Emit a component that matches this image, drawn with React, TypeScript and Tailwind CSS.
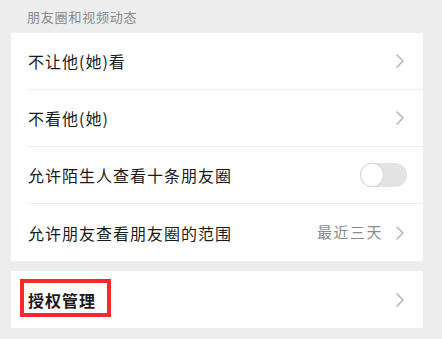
const font = { fontFamily: '"Noto Sans CJK SC", "Noto Sans", sans-serif' };

function Chevron() {
  return (
    <svg width="8" height="14" viewBox="0 0 8 14" className="shrink-0">
      <polyline points="1,1 7,7 1,13" fill="none" stroke="#b5b5b5" strokeWidth="1.5" strokeLinejoin="round" strokeLinecap="round" />
    </svg>
  );
}

function Toggle() {
  return (
    <div className="relative -mr-[3px] w-[47px] h-[24px] rounded-full bg-[#e3e3e3]">
      <div className="absolute left-[1px] top-[1px] w-[22px] h-[22px] rounded-full bg-white shadow-[0_0_0_1px_#d6d6d6]" />
    </div>
  );
}

function Row({ label, bold, last, children }: { label: string; bold?: boolean; last?: boolean; children: React.ReactNode }) {
  return (
    <div className="pl-[17px]">
      <div className={`flex h-[57px] items-center justify-between pr-[19px] ${last ? "" : "border-b border-[#ececec]"}`}>
        <span className={`text-[16px] tracking-[1px] text-[#1a1a1a] ${bold ? "font-bold" : ""}`}>{label}</span>
        {children}
      </div>
    </div>
  );
}

export default function App() {
  return (
    <div style={font} className="w-[442px] h-[339px] bg-[#ededed] pl-[11px] pr-[19px] overflow-hidden">
      <div className="h-[33px] flex items-center pl-[16px] text-[13px] tracking-[0.8px] text-[#8a8a8a]">朋友圈和视频动态</div>
      <div className="bg-white">
        <Row label="不让他(她)看"><Chevron /></Row>
        <Row label="不看他(她)"><Chevron /></Row>
        <Row label="允许陌生人查看十条朋友圈"><Toggle /></Row>
        <Row label="允许朋友查看朋友圈的范围" last>
          <div className="flex items-center gap-[13px]">
            <span className="text-[15px] tracking-[1.5px] text-[#8a8a8a]">最近三天</span>
            <Chevron />
          </div>
        </Row>
      </div>
      <div className="relative bg-white mt-[10px]">
        <Row label="授权管理" bold last><Chevron /></Row>
        <div className="absolute left-[9px] top-[8px] w-[91px] h-[38px] border-[4px] border-[#f52a2a]" />
      </div>
    </div>
  );
}
